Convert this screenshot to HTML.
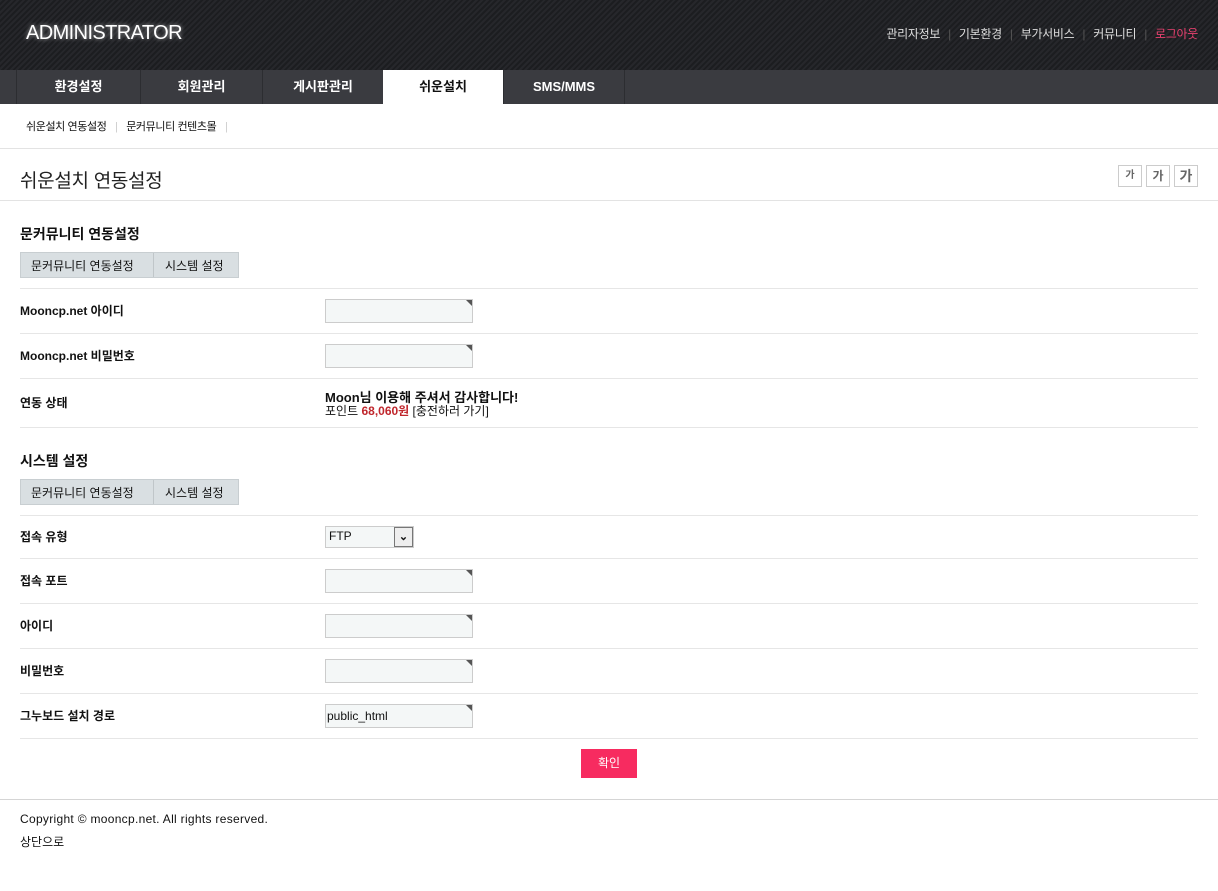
<!DOCTYPE html>
<html><head><meta charset="utf-8"><style>
*{margin:0;padding:0;box-sizing:border-box}
body{width:1218px;height:891px;background:#fff;font-family:"Liberation Sans","Noto Sans CJK KR","NanumGothic",sans-serif;font-size:12px;color:#111;position:relative;overflow:hidden}
.a{position:absolute}
#hd{left:0;top:0;width:1218px;height:70px;background:repeating-linear-gradient(135deg,#26272b 0 2px,#1c1d20 2px 4px)}
#logo{left:26px;top:22px;color:#fff;font-size:20px;letter-spacing:-0.6px;text-shadow:0 0 4px rgba(255,255,255,.6)}
#tl{right:20px;top:25px;color:#ddd;font-size:12px;letter-spacing:-0.3px}
#tl span.s{color:#555;margin:0 8px}
#nav{left:0;top:70px;width:1218px;height:34px;background:#3a3b40}
.t{top:70px;height:34px;line-height:34px;text-align:center;color:#fff;font-weight:bold;font-size:13px;border-left:1px solid #2c2d31}
.line{left:0;width:1218px;height:1px;background:#e3e3e3}
.rl{left:20px;width:1178px;height:1px;background:#e6e6e6}
.lbl{left:20px;font-weight:bold;font-size:12px}
.inp{left:325px;width:148px;height:24px;background:#f4f7f7;border:1px solid #ccc}
.inp:after{content:"";position:absolute;right:0;top:0;border-top:6px solid #555;border-left:6px solid transparent}
.btns{left:20px;height:26px;width:219px;background:#d9dfe2;border:1px solid #c8ced1;font-size:12px}
.btns span{position:absolute;top:4px}
.fs{width:24px;height:22px;top:165px;border:1px solid #ccc;color:#666;text-align:center;line-height:20px;font-weight:bold}
</style></head><body>
<div class="a" id="hd"></div>
<div class="a" id="logo">ADMINISTRATOR</div>
<div class="a" id="tl">관리자정보<span class="s">|</span>기본환경<span class="s">|</span>부가서비스<span class="s">|</span>커뮤니티<span class="s">|</span><span style="color:#e8416f">로그아웃</span></div>
<div class="a" id="nav"></div>
<div class="a t" style="left:16px;width:124px">환경설정</div>
<div class="a t" style="left:140px;width:122px">회원관리</div>
<div class="a t" style="left:262px;width:121px">게시판관리</div>
<div class="a t" style="left:383px;width:120px;background:#fff;color:#111;border:0">쉬운설치</div>
<div class="a t" style="left:503px;width:122px;border-right:1px solid #2c2d31">SMS/MMS</div>
<div class="a" style="left:26px;top:118px;font-size:11px;letter-spacing:-0.4px">쉬운설치 연동설정 <span style="color:#ccc;margin:0 6px">|</span> 문커뮤니티 컨텐츠몰 <span style="color:#ccc;margin-left:6px">|</span></div>
<div class="a line" style="top:148px"></div>
<div class="a" style="left:20px;top:166px;font-size:19px;color:#222;letter-spacing:-0.3px">쉬운설치 연동설정</div>
<div class="a fs" style="left:1118px;font-size:10px">가</div>
<div class="a fs" style="left:1146px;font-size:12px">가</div>
<div class="a fs" style="left:1174px;font-size:14px">가</div>
<div class="a line" style="top:200px"></div>

<div class="a" style="left:20px;top:224px;font-size:14px;font-weight:bold">문커뮤니티 연동설정</div>
<div class="a btns" style="top:252px"><span style="left:10px">문커뮤니티 연동설정</span><span style="left:132px;top:0;width:1px;height:24px;background:#c0c6c9"></span><span style="left:144px">시스템 설정</span></div>
<div class="a rl" style="top:288px"></div>
<div class="a lbl" style="top:302px">Mooncp.net 아이디</div>
<div class="a inp" style="top:299px"></div>
<div class="a rl" style="top:333px"></div>
<div class="a lbl" style="top:347px">Mooncp.net 비밀번호</div>
<div class="a inp" style="top:344px"></div>
<div class="a rl" style="top:378px"></div>
<div class="a lbl" style="top:394px">연동 상태</div>
<div class="a" style="left:325px;top:387px;font-weight:bold;font-size:13px">Moon님 이용해 주셔서 감사합니다!</div>
<div class="a" style="left:325px;top:402px">포인트 <b style="color:#c0272d">68,060원</b> [충전하러 가기]</div>
<div class="a rl" style="top:427px"></div>

<div class="a" style="left:20px;top:451px;font-size:14px;font-weight:bold">시스템 설정</div>
<div class="a btns" style="top:479px"><span style="left:10px">문커뮤니티 연동설정</span><span style="left:132px;top:0;width:1px;height:24px;background:#c0c6c9"></span><span style="left:144px">시스템 설정</span></div>
<div class="a rl" style="top:515px"></div>
<div class="a lbl" style="top:528px">접속 유형</div>
<div class="a" style="left:325px;top:526px;width:89px;height:22px;background:#f4f7f7;border:1px solid #ccc;padding:2px 3px">FTP</div>
<div class="a" style="left:394px;top:527px;width:19px;height:20px;border:1px solid #777;background:#eee;text-align:center;line-height:18px;font-size:11px;font-weight:bold">&#8964;</div>
<div class="a rl" style="top:558px"></div>
<div class="a lbl" style="top:572px">접속 포트</div>
<div class="a inp" style="top:569px"></div>
<div class="a rl" style="top:603px"></div>
<div class="a lbl" style="top:617px">아이디</div>
<div class="a inp" style="top:614px"></div>
<div class="a rl" style="top:648px"></div>
<div class="a lbl" style="top:662px">비밀번호</div>
<div class="a inp" style="top:659px"></div>
<div class="a rl" style="top:693px"></div>
<div class="a lbl" style="top:707px">그누보드 설치 경로</div>
<div class="a inp" style="top:704px;padding:4px 1px">public_html</div>
<div class="a rl" style="top:738px"></div>
<div class="a" style="left:581px;top:749px;width:56px;height:29px;background:#f72b60;color:#fff;text-align:center;line-height:29px">확인</div>
<div class="a line" style="top:799px;background:#d5d5d5"></div>
<div class="a" style="left:20px;top:812px;letter-spacing:0.3px">Copyright © mooncp.net. All rights reserved.</div>
<div class="a" style="left:20px;top:833px">상단으로</div>
</body></html>
